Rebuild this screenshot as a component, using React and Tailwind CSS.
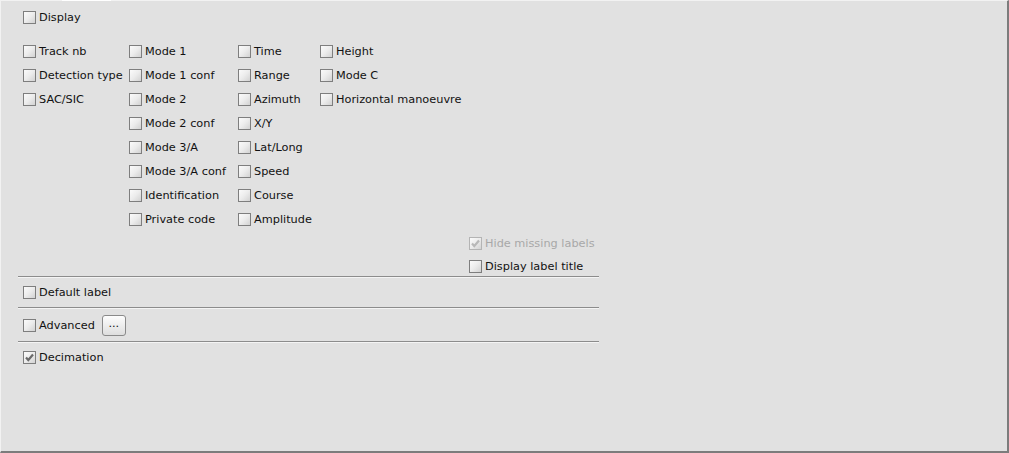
import React from "react";

const font = { fontFamily: '"DejaVu Sans", "Liberation Sans", sans-serif' };

function Box({ checked, disabled }) {
  return (
    <span
      className={`relative flex h-[13px] w-[13px] shrink-0 items-center justify-center border ${
        disabled ? "border-[#b4b4b4]" : "border-[#7e7e7e]"
      } bg-gradient-to-br from-[#fbfbfb] via-[#ececec] to-[#d2d2d2]`}
    >
      {checked && (
        <svg width="11" height="11" viewBox="0 0 11 11">
          <path
            d="M2 5.5 L4.3 8 L9 2.5"
            fill="none"
            stroke={disabled ? "#b8b8b8" : "#6a6a6a"}
            strokeWidth="2.2"
          />
        </svg>
      )}
    </span>
  );
}

function Check({ label, checked, disabled, className = "" }) {
  return (
    <div className={`flex h-6 items-center ${className}`}>
      <Box checked={checked} disabled={disabled} />
      <span
        className={`ml-[3px] mt-px whitespace-nowrap text-[11.3px] leading-none ${
          disabled ? "text-[#a8a8a8]" : "text-[#111]"
        }`}
      >
        {label}
      </span>
    </div>
  );
}

function Sep() {
  return (
    <div className="ml-[17px] w-[581px]">
      <div className="h-px bg-[#8c8c8c]" />
      <div className="h-px bg-[#f4f4f4]" />
    </div>
  );
}

const col1 = ["Track nb", "Detection type", "SAC/SIC"];
const col2 = [
  "Mode 1",
  "Mode 1 conf",
  "Mode 2",
  "Mode 2 conf",
  "Mode 3/A",
  "Mode 3/A conf",
  "Identification",
  "Private code",
];
const col3 = ["Time", "Range", "Azimuth", "X/Y", "Lat/Long", "Speed", "Course", "Amplitude"];
const col4 = ["Height", "Mode C", "Horizontal manoeuvre"];

export default function App() {
  return (
    <div
      style={font}
      className="relative flex h-[453px] w-[1009px] flex-col border-l border-t border-b-2 border-r-2 border-l-[#f2f2f2] border-t-[#f2f2f2] border-b-[#7c7c7c] border-r-[#7c7c7c] bg-[#e1e1e1]"
    >
      <div className="absolute left-[61px] top-[-1px] h-px w-[49px] bg-white" />
      <div className="pl-[22px] pt-[4px]">
        <Check label="Display" />
      </div>
      <div className="mt-[10px] flex pl-[22px]">
        <div className="flex w-[106px] flex-col">
          {col1.map((l) => (
            <Check key={l} label={l} />
          ))}
        </div>
        <div className="flex w-[109px] flex-col">
          {col2.map((l) => (
            <Check key={l} label={l} />
          ))}
        </div>
        <div className="flex w-[82px] flex-col">
          {col3.map((l) => (
            <Check key={l} label={l} />
          ))}
        </div>
        <div className="flex flex-col">
          {col4.map((l) => (
            <Check key={l} label={l} />
          ))}
        </div>
      </div>
      <div className="pl-[468px]">
        <Check label="Hide missing labels" checked disabled />
        <Check label="Display label title" className="h-[21px] pt-[2px]" />
      </div>
      <Sep />
      <div className="pl-[22px]">
        <Check label="Default label" className="h-[29px]" />
      </div>
      <Sep />
      <div className="flex h-[32px] items-center pl-[22px]">
        <Box />
        <span className="ml-[3px] mt-px text-[11.3px] leading-none text-[#111]">Advanced</span>
        <button className="ml-[7px] flex h-[21px] w-[24px] items-center justify-center rounded-[3px] border border-[#8a8a8a] bg-gradient-to-b from-[#fdfdfd] to-[#dedede] pb-[3px] text-[11.3px] leading-none text-[#111]">
          ...
        </button>
      </div>
      <Sep />
      <div className="pl-[22px]">
        <Check label="Decimation" checked className="h-[28px]" />
      </div>
    </div>
  );
}
